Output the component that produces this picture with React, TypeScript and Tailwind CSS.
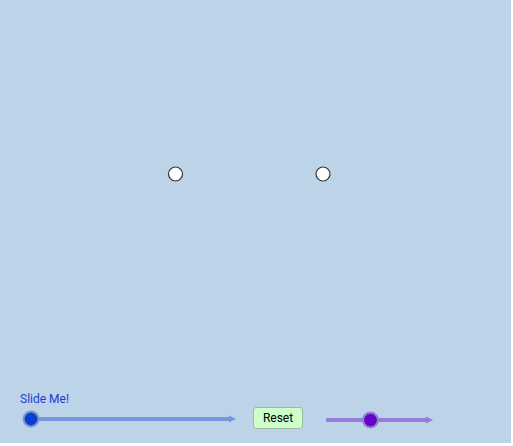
import React from "react";

export default function App() {
  return (
    <div className="w-[513px] h-[446px] bg-white" style={{ fontFamily: "Roboto, 'Liberation Sans', sans-serif" }}>
      <div className="relative w-[511px] h-[443px] bg-[#bdd3e7] overflow-hidden">
        <svg className="absolute left-0 top-0" width="511" height="443">
          {/* points */}
          <circle cx="175.5" cy="174" r="7" fill="#ffffff" stroke="#333333" strokeWidth="1.2" />
          <circle cx="323" cy="174" r="7" fill="#ffffff" stroke="#333333" strokeWidth="1.2" />
          {/* slider 1 */}
          <line x1="31" y1="419" x2="231" y2="419" stroke="#7597db" strokeWidth="4" />
          <polygon points="229,415.5 236,419 229,422.5" fill="#7597db" />
          <circle cx="31" cy="419" r="8.5" fill="#7597db" />
          <circle cx="31" cy="419" r="6" fill="#0b3ed6" stroke="#1a1a40" strokeWidth="1" strokeDasharray="1 1" />
          {/* slider 2 */}
          <line x1="326" y1="420" x2="428" y2="420" stroke="#9a7add" strokeWidth="4" />
          <polygon points="426,416.5 433,420 426,423.5" fill="#9a7add" />
          <circle cx="370.5" cy="420" r="8.5" fill="#9a7add" />
          <circle cx="370.5" cy="420" r="6" fill="#6a00d0" stroke="#1a1a40" strokeWidth="1" strokeDasharray="1 1" />
        </svg>
        <div className="absolute left-[20px] top-[391px] text-[12px] leading-[16px] text-[#1a3ed0]">Slide Me!</div>
        <button className="absolute left-[253px] top-[407px] w-[50px] h-[22px] rounded-[3px] border border-[#a0b8a0] bg-[#ccffcc] text-[12px] leading-[20px] text-black">
          Reset
        </button>
      </div>
    </div>
  );
}
